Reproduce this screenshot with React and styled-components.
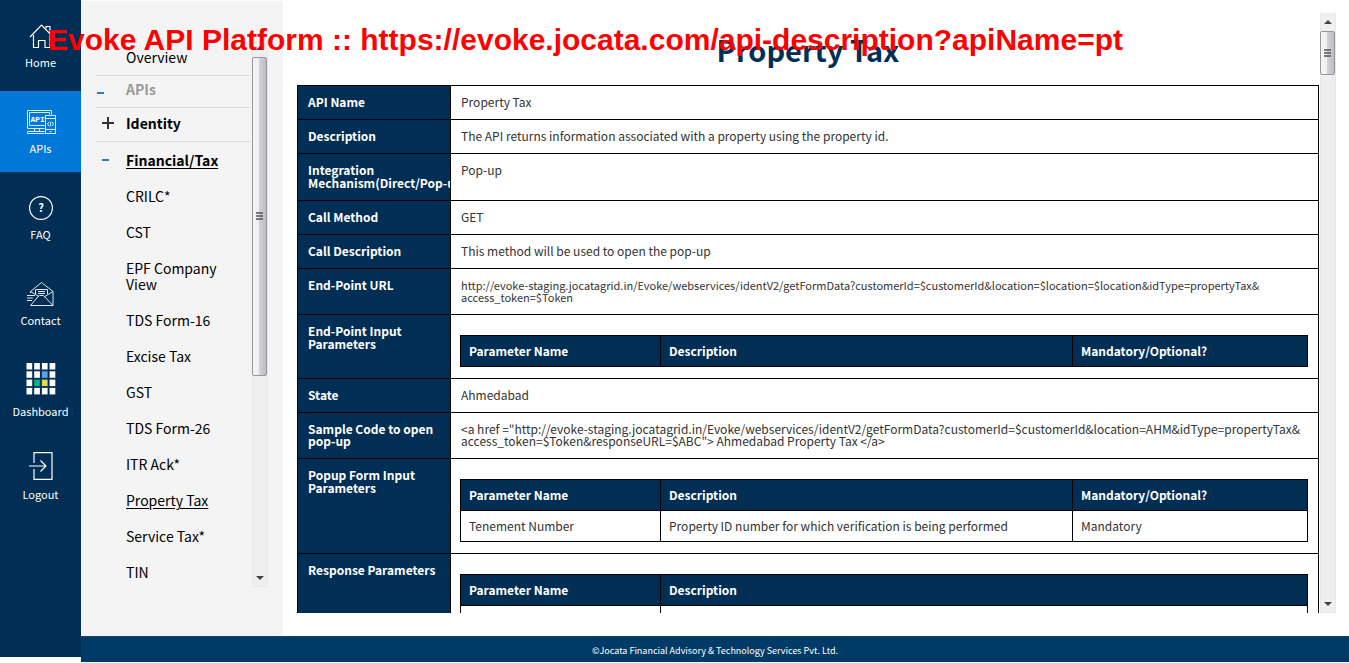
import React from 'react';
import styled, { createGlobalStyle, css } from 'styled-components';

const navy = '#002e54';

const GlobalStyle = createGlobalStyle`
  *, *::before, *::after { box-sizing: border-box; }
  body {
    margin: 0;
    background: #fff;
    color: #333;
    font-family: "Noto Sans CJK SC", "Noto Sans", sans-serif;
    font-size: 12px;
  }
  a { color: inherit; text-decoration: none; }
`;

const Page = styled.div`
  position: relative;
  display: flex;
  height: 100vh;
  min-height: 520px;
  overflow: hidden;
`;

const Caption = styled.div`
  position: absolute;
  top: 20px;
  left: 48px;
  z-index: 5;
  color: #f00;
  font: bold 30px/40px "Liberation Sans", Arial, sans-serif;
  white-space: nowrap;
  pointer-events: none;
`;

const Rail = styled.nav`
  flex: 0 0 81px;
  display: flex;
  flex-direction: column;
  gap: 5px;
  padding-top: 5px;
  margin-bottom: 6px;
  background: ${navy};
`;

const RailLink = styled.a`
  display: flex;
  flex-direction: column;
  align-items: center;
  gap: 4px;
  padding: ${(p) => (p.$large ? '12px' : '19px')} 0 14px;
  background: ${(p) => (p.$active ? '#0078d7' : 'transparent')};
  color: #fff;
  font-size: 11px;
  line-height: 20px;
  svg { display: block; }
`;

const Column = styled.div`
  flex: 1;
  min-width: 0;
  display: flex;
  flex-direction: column;
  margin-bottom: 1px;
`;

const Body = styled.div`
  flex: 1;
  min-height: 0;
  display: flex;
`;

const Footer = styled.footer`
  border-top: 1px solid #10466f;
  background: #003b67;
  color: #fff;
  padding-top: 2px;
  font-size: 9px;
  line-height: 23px;
  text-align: center;
`;

const Aside = styled.aside`
  flex: 0 0 202px;
  display: flex;
  margin-top: 1px;
  padding: 38px 15px 49px;
  background: #f4f4f4;
  color: #000;
`;

const Menu = styled.ul`
  flex: 1;
  min-width: 0;
  overflow: hidden;
  list-style: none;
  margin: 2px 1px 0 0;
  padding: 0;
  font-size: 14px;
  line-height: 16px;
`;

const MenuItem = styled.li`
  display: flex;
  padding: 10px 0;
  ${(p) => p.$ruled && css`
    align-items: center;
    padding: 8px 0 10px;
    border-bottom: 1px solid #dcdcdc;
  `}
  ${(p) => p.$muted && css`
    padding: 5px 0 10px;
    color: #999;
  `}
  ${(p) => p.$group && css`
    padding: 7px 0 10px;
  `}
  a {
    flex: 1;
    padding-right: 10px;
    font-weight: ${(p) => (p.$bold ? 700 : 400)};
    text-decoration: ${(p) => (p.$underlined ? 'underline' : 'none')};
    text-underline-offset: 2px;
  }
`;

const Toggle = styled.button`
  flex: 0 0 30px;
  display: flex;
  align-items: center;
  height: 16px;
  padding: ${(p) => (p.$nested ? '0 0 0 6px' : '8px 0 0 1px')};
  border: 0;
  background: none;
  svg { flex: none; }
`;

const ToggleGap = styled.span`
  flex: 0 0 30px;
`;

const Track = styled.div`
  flex: 0 0 16px;
  display: flex;
  flex-direction: column;
  align-items: stretch;
  border: 1px solid #e8e8e8;
  border-top: 0;
  background: #efefef;
`;

const ArrowBox = styled.div`
  display: flex;
  flex: 0 0 ${(p) => (p.$end ? '16px' : '18px')};
  align-items: center;
  justify-content: center;
  margin-top: ${(p) => (p.$end ? 'auto' : '0')};
`;

const Thumb = styled.div`
  display: flex;
  flex: 0 0 ${(p) => p.$size};
  align-items: center;
  justify-content: center;
  margin: 0 0 0 -1px;
  border: 1px solid #97979b;
  border-radius: 2px;
  background: linear-gradient(90deg, #f6f6f6 0, #eee 45%, #d2d2d6 50%, #bcbcc2 100%);
`;

const Main = styled.main`
  flex: 1;
  min-width: 0;
  display: flex;
  gap: 1px;
  padding: 13px 13px 23px 14px;
`;

const Pane = styled.div`
  flex: 1;
  min-width: 0;
  overflow: hidden;
`;

const Title = styled.h1`
  margin: 0;
  padding: 16px 0;
  color: ${navy};
  font-size: 29px;
  line-height: 40px;
  text-align: center;
`;

const Sheet = styled.table`
  width: 100%;
  table-layout: fixed;
  border-collapse: collapse;
`;

const LabelCell = styled.th`
  width: 153px;
  overflow: hidden;
  padding: ${(p) => (p.$dense ? '10px 0 11px' : '9px 0 11px')} 10px;
  border: 1px solid #000;
  background: ${navy};
  color: #fff;
  font-weight: 700;
  line-height: ${(p) => (p.$dense ? '12px' : '13px')};
  text-align: left;
  vertical-align: top;
`;

const Unbroken = styled.span`
  white-space: nowrap;
`;

const ValueCell = styled.td`
  padding: ${(p) => (p.$holdsTable ? '20px 10px 11px 9px' : '10px 10px 11px')};
  border: 1px solid #000;
  font-size: ${(p) => (p.$small ? '11px' : '12px')};
  line-height: 12px;
  vertical-align: top;
`;

const HeadCell = styled.th`
  width: ${(p) => p.$width};
  padding: 9px 8px;
  border: 1px solid #000;
  background: ${navy};
  color: #fff;
  font-weight: 700;
  line-height: 12px;
  text-align: left;
`;

const BodyCell = styled.td`
  padding: 9px 8px;
  border: 1px solid #000;
  line-height: 12px;
`;

const stroke = { fill: 'none', stroke: '#fff', strokeWidth: 1.2 };

const HomeIcon = () => (
  <svg width="26" height="24" viewBox="0 0 26 24" {...stroke}>
    <path d="M2 13 13.5 1 25 13" />
    <path d="M5.5 11v12.5h5v-7H17v7h5V11" />
    <path d="M18 4.5v-2h4V9" />
  </svg>
);

const ApiIcon = () => (
  <svg width="30" height="24" viewBox="0 0 30 24" fill="none" stroke="#d5eaff" strokeWidth="1">
    <path d="M18.5 18.5h-17V.5h24v4" />
    <path d="M3.5 15.5v-13h20v2M3.5 15.5h15" />
    <path d="M8.5 18.5V21M13.5 18.5V21M1.5 21.5h17M1.5 23.5h17M1.5 21.5v2" />
    <rect x="19.5" y="5.5" width="10" height="18" />
    <path d="M19.5 8.5h10M19.5 19.5h10M23.5 21.5h2" />
    <path d="M23 12l-1.5 2 1.5 2M26 12l1.5 2-1.5 2M25 11.5l-1 5" />
    <text x="4.5" y="12" fill="#fff" stroke="none" fontFamily="Liberation Mono, monospace" fontWeight="700" fontSize="8">API</text>
  </svg>
);

const FaqIcon = () => (
  <svg width="26" height="24" viewBox="0 0 26 24" {...stroke}>
    <circle cx="13" cy="12" r="11.4" />
    <text x="13" y="16" fill="#fff" stroke="none" textAnchor="middle" fontWeight="700" fontSize="11">?</text>
  </svg>
);

const ContactIcon = () => (
  <svg width="28" height="24" viewBox="0 0 28 24" fill="none" stroke="#dfe6ec" strokeWidth="1">
    <path d="M3.5 11V9.5l11-9 11.5 9v14H3.5l8.5-10" />
    <path d="M26 9.5 17 15M3.5 9.5l8.5 5M26 23.5l-9.5-10h-4" />
    <path d="M8.5 12V7.5h12V12M11 9.500h7M11 11.500h7" />
    <path d="M0 13.5h8M0 16h6M0 18.5h5" />
  </svg>
);

const tints = { 6: '#5aa5e0', 9: '#00b388', 10: '#dde04a' };
const DashboardIcon = () => (
  <svg width="30" height="36" viewBox="0 0 30 36">
    {Array.from({ length: 16 }, (_, i) => (
      <rect
        key={i}
        x={(i % 4) * 7.7 + 0.5}
        y={Math.floor(i / 4) * 8.3 + 2}
        width="5.7"
        height="6.5"
        fill={tints[i] || '#fff'}
      />
    ))}
  </svg>
);

const LogoutIcon = () => (
  <svg width="26" height="28" viewBox="0 0 26 28" {...stroke}>
    <path d="M6 11V.6h18v26.8H6V17" />
    <path d="M1 14h17M12.5 8.5 18 14l-5.5 5.5" />
  </svg>
);

const Minus = () => (
  <svg width="8" height="12" viewBox="0 0 8 12"><path d="M0 6h7" stroke="#337ab7" strokeWidth="2" /></svg>
);

const Plus = () => (
  <svg width="12" height="12" viewBox="0 0 12 12"><path d="M0 6h12M6 0v12" stroke="#333" strokeWidth="2" /></svg>
);

const Arrow = ({ down }) => (
  <svg width="8" height="4" viewBox="0 0 8 4">
    <path d={down ? 'M0 0h8L4 4z' : 'M0 4h8L4 0z'} fill="#444" />
  </svg>
);

const Grip = () => (
  <svg width="7" height="9" viewBox="0 0 7 9">
    <path d="M0 1h7M0 4h7M0 7h7" stroke="#55555a" strokeWidth="1.4" />
  </svg>
);

const ScrollBar = ({ size }) => (
  <Track aria-hidden="true">
    <ArrowBox><Arrow /></ArrowBox>
    <Thumb $size={size}><Grip /></Thumb>
    <ArrowBox $end><Arrow down /></ArrowBox>
  </Track>
);

const railLinks = [
  { label: 'Home', Icon: HomeIcon },
  { label: 'APIs', Icon: ApiIcon, active: true },
  { label: 'FAQ', Icon: FaqIcon },
  { label: 'Contact', Icon: ContactIcon },
  { label: 'Dashboard', Icon: DashboardIcon, large: true },
  { label: 'Logout', Icon: LogoutIcon, large: true },
];

const taxApis = [
  'CRILC*', 'CST', 'EPF Company View', 'TDS Form-16', 'Excise Tax', 'GST',
  'TDS Form-26', 'ITR Ack*', 'Property Tax', 'Service Tax*', 'TIN',
];

const ParameterTable = ({ columns, rows }) => (
  <Sheet>
    <thead>
      <tr>
        {columns.map(([name, width]) => <HeadCell key={name} $width={width} scope="col">{name}</HeadCell>)}
      </tr>
    </thead>
    {rows && (
      <tbody>
        {rows.map((row, i) => (
          <tr key={i}>{row.map((cell, j) => <BodyCell key={j}>{cell}</BodyCell>)}</tr>
        ))}
      </tbody>
    )}
  </Sheet>
);

const inputColumns = [
  ['Parameter Name', '200px'],
  ['Description', 'auto'],
  ['Mandatory/Optional?', '235px'],
];
const responseColumns = [
  ['Parameter Name', '200px'],
  ['Description', 'auto'],
];

const details = [
  { label: 'API Name', value: 'Property Tax' },
  { label: 'Description', value: 'The API returns information associated with a property using the property id.' },
  { label: <>Integration <Unbroken>Mechanism(Direct/Pop-up)</Unbroken></>, value: 'Pop-up' },
  { label: 'Call Method', value: 'GET' },
  { label: 'Call Description', value: 'This method will be used to open the pop-up' },
  {
    label: 'End-Point URL',
    small: true,
    value: (
      <>
        <Unbroken>{'http://evoke-staging.jocatagrid.in/Evoke/webservices/identV2/getFormData?customerId=$customerId&location=$location=$location&idType=propertyTax&'}</Unbroken>
        <br />
        access_token=$Token
      </>
    ),
  },
  { label: 'End-Point Input Parameters', table: <ParameterTable columns={inputColumns} /> },
  { label: 'State', value: 'Ahmedabad' },
  {
    label: 'Sample Code to open pop-up',
    dense: true,
    value: <>{'<a href ="http://evoke-staging.jocatagrid.in/Evoke/webservices/identV2/getFormData?customerId=$customerId&location=AHM&idType=propertyTax&'}<wbr />{'access_token=$Token&responseURL=$ABC"> Ahmedabad Property Tax </a>'}</>,
  },
  {
    label: 'Popup Form Input Parameters',
    table: (
      <ParameterTable
        columns={inputColumns}
        rows={[['Tenement Number', 'Property ID number for which verification is being performed', 'Mandatory']]}
      />
    ),
  },
  {
    label: 'Response Parameters',
    table: <ParameterTable columns={responseColumns} rows={[['\u00a0', '\u00a0']]} />,
  },
];

export default function App() {
  return (
    <>
      <GlobalStyle />
      <Page>
        <Caption>Evoke API Platform :: https://evoke.jocata.com/api-description?apiName=pt</Caption>
        <Rail>
          {railLinks.map(({ label, Icon, active, large }) => (
            <RailLink key={label} href="#" $active={active} $large={large}>
              <Icon />
              {label}
            </RailLink>
          ))}
        </Rail>
        <Column>
          <Body>
            <Aside>
              <Menu>
                <MenuItem $ruled><ToggleGap /><a href="#">Overview</a></MenuItem>
                <MenuItem $ruled $muted $bold>
                  <Toggle aria-label="Collapse APIs"><Minus /></Toggle><a href="#">APIs</a>
                </MenuItem>
                <MenuItem $ruled $group $bold>
                  <Toggle $nested aria-label="Expand Identity"><Plus /></Toggle><a href="#">Identity</a>
                </MenuItem>
                <MenuItem $bold $underlined>
                  <Toggle $nested aria-label="Collapse Financial/Tax"><Minus /></Toggle><a href="#">Financial/Tax</a>
                </MenuItem>
                {taxApis.map((name) => (
                  <MenuItem key={name} $underlined={name === 'Property Tax'}>
                    <ToggleGap /><a href="#">{name}</a>
                  </MenuItem>
                ))}
              </Menu>
              <ScrollBar size="319px" />
            </Aside>
            <Main>
              <Pane>
                <Title>Property Tax</Title>
                <Sheet>
                  <tbody>
                    {details.map(({ label, value, table, dense, small }, i) => (
                      <tr key={i}>
                        <LabelCell scope="row" $dense={dense}>{label}</LabelCell>
                        <ValueCell $holdsTable={Boolean(table)} $small={small}>{table || value}</ValueCell>
                      </tr>
                    ))}
                  </tbody>
                </Sheet>
              </Pane>
              <ScrollBar size="44px" />
            </Main>
          </Body>
          <Footer>©Jocata Financial Advisory &amp; Technology Services Pvt. Ltd.</Footer>
        </Column>
      </Page>
    </>
  );
}
